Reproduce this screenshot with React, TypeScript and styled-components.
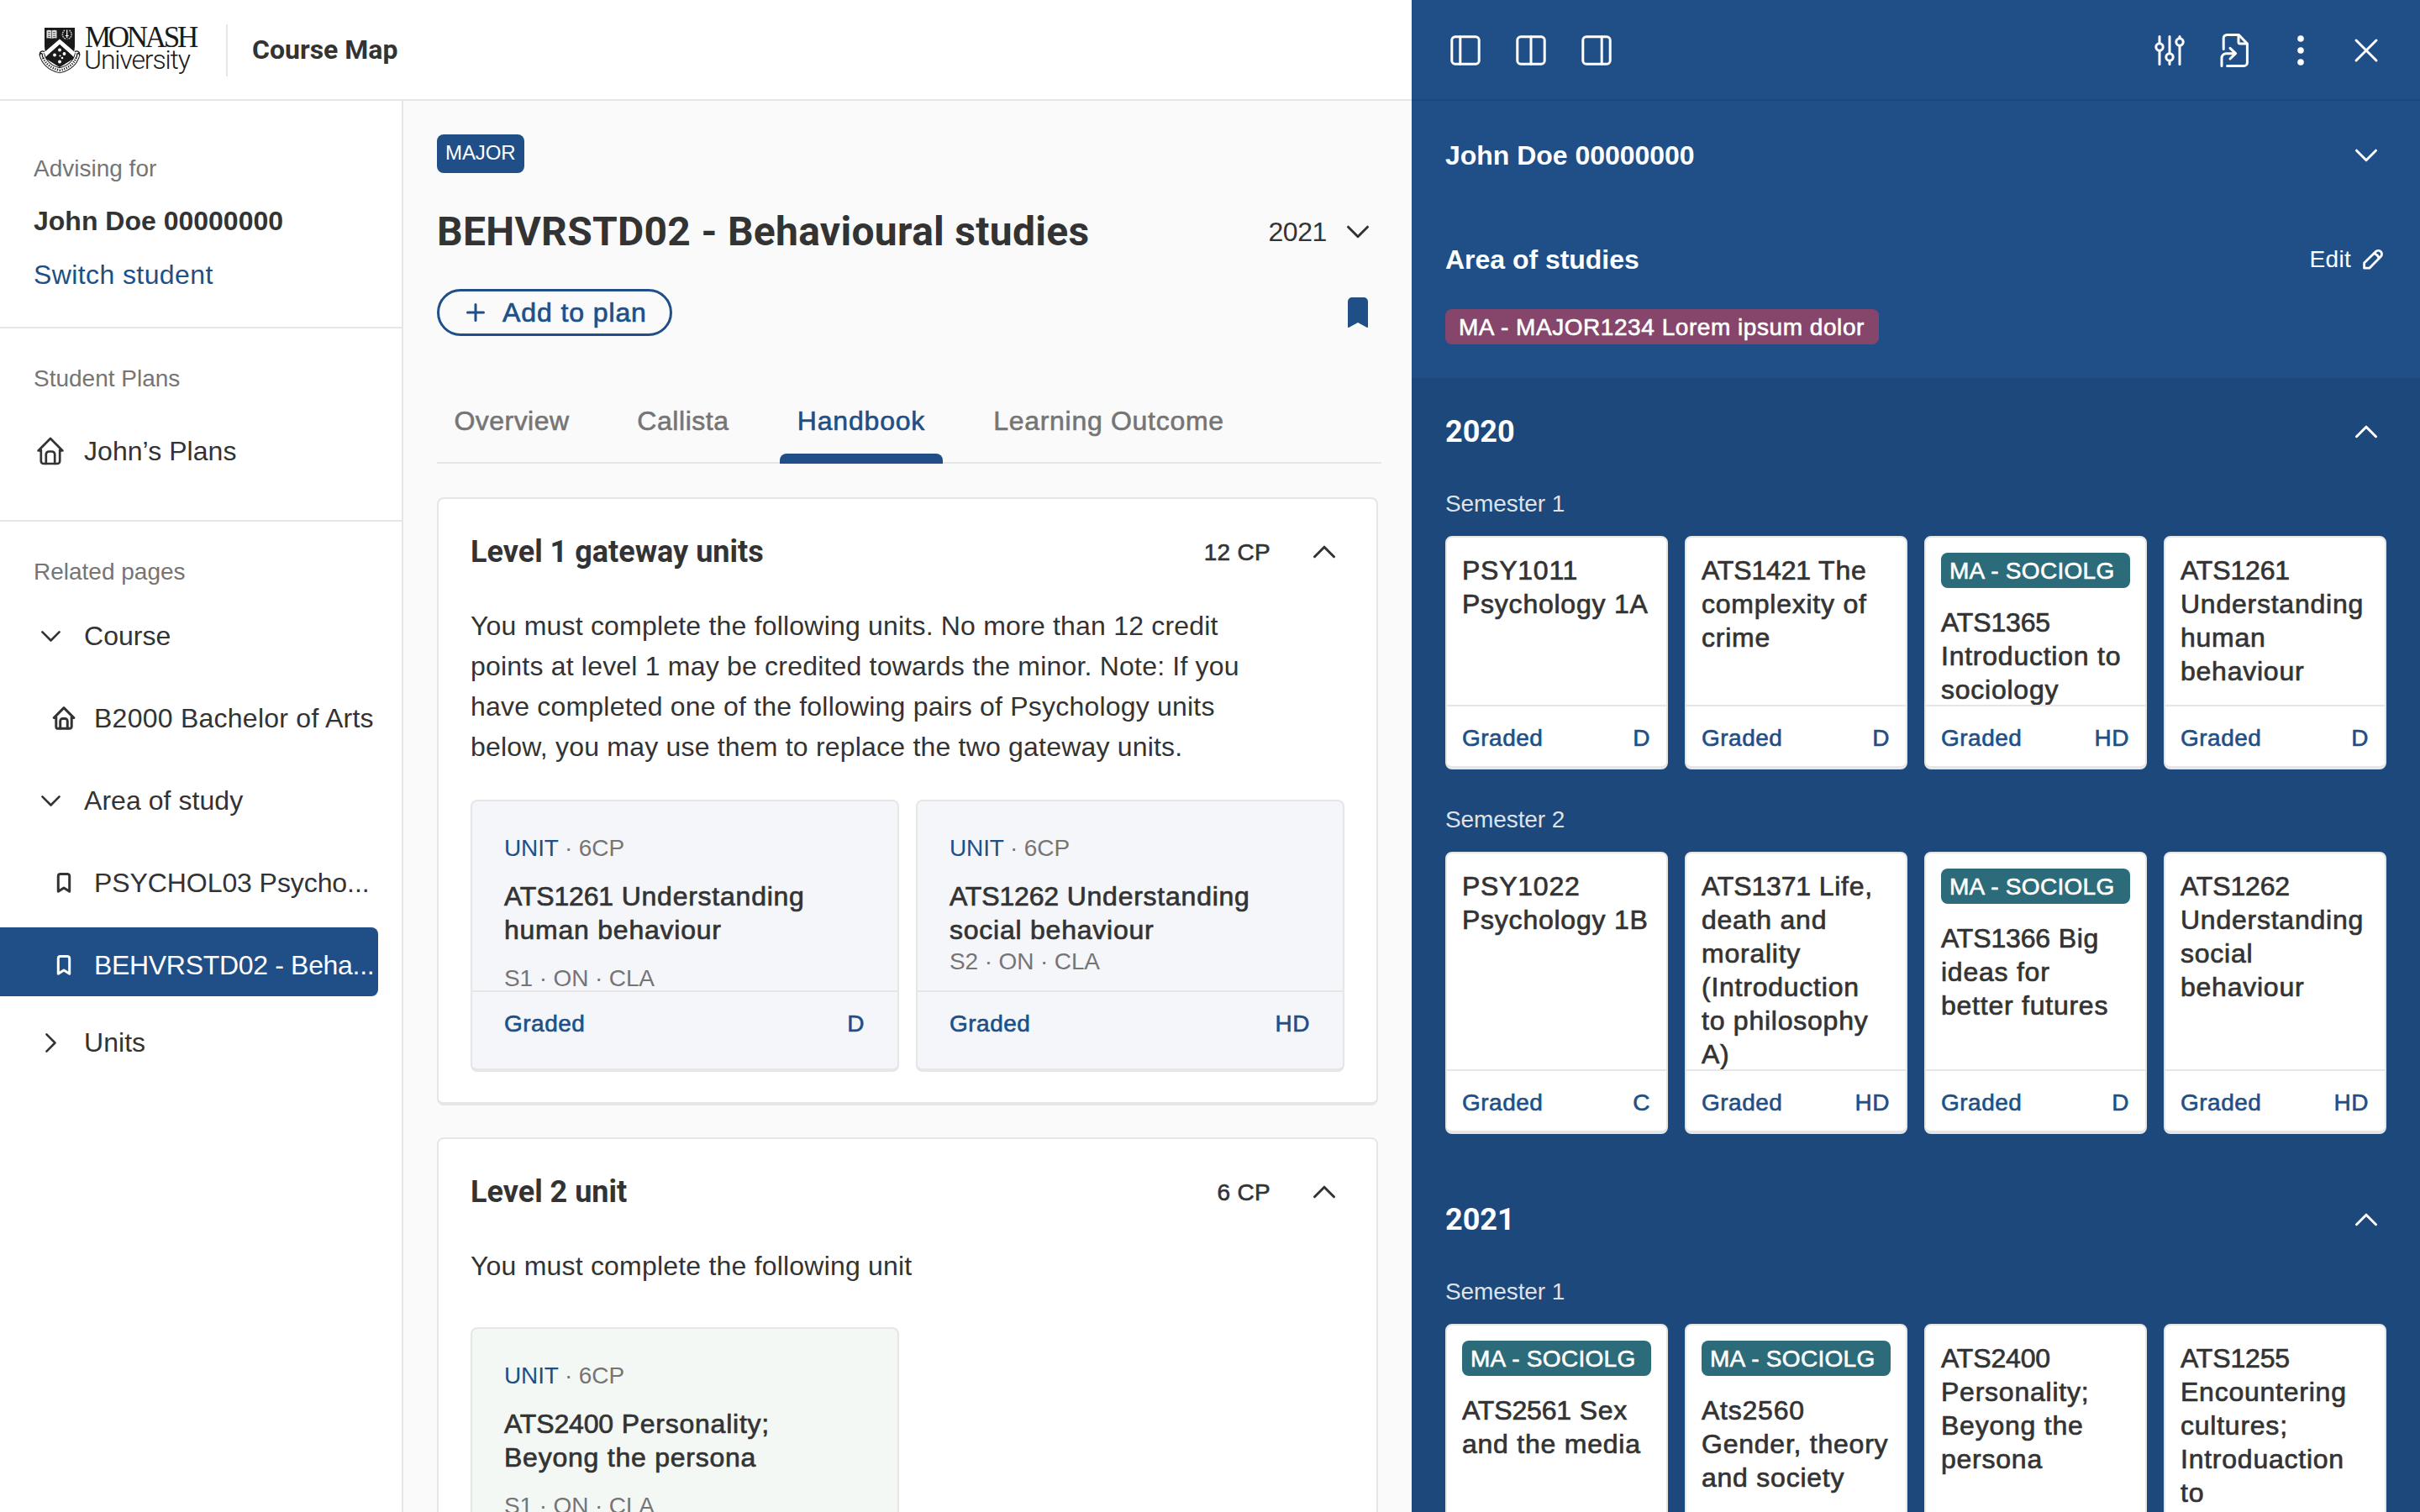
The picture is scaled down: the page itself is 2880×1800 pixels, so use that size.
import React from 'react';
import styled, { createGlobalStyle } from 'styled-components';

const c = {
  blue: '#204f87',
  navy: '#1d487b',
  ink: '#333333',
  grey: '#757575',
  line: '#e6e6e6',
  page: '#fafafa',
  plum: '#86466b',
  teal: '#2c6c7a',
};

const sans = `'Liberation Sans', Arial, Helvetica, sans-serif`;
const heading = `Roboto, 'Liberation Sans', sans-serif`;

const GlobalStyle = createGlobalStyle`
  * { box-sizing: border-box; }
  body {
    margin: 0;
    font-family: ${sans};
    font-size: 32px;
    line-height: 40px;
    letter-spacing: 0.2px;
    color: ${c.ink};
    background: #fff;
    overflow: hidden;
  }
  h1, h2, h3, p { margin: 0; }
  svg { display: block; flex: none; }
`;

/* ---------- icons ---------- */

const StrokeIcon = styled.svg<{ $w?: number }>`
  fill: none;
  stroke: currentColor;
  stroke-width: ${(p) => p.$w ?? 3};
  stroke-linecap: round;
  stroke-linejoin: round;
`;

const CHEVRONS = {
  down: 'M8.5 14.2L20 25.7L31.5 14.2',
  up: 'M8.5 25.7L20 14.2L31.5 25.7',
  right: 'M14.2 8.5L25.7 20L14.2 31.5',
};

const Chevron = ({ dir, size = 40 }: { dir: keyof typeof CHEVRONS; size?: number }) => (
  <StrokeIcon width={size} height={size} viewBox="0 0 40 40">
    <path d={CHEVRONS[dir]} />
  </StrokeIcon>
);

const House = ({ size = 34, w = 2.7 }: { size?: number; w?: number }) => (
  <StrokeIcon $w={w} width={size} height={size} viewBox="-1 0 34 34">
    <path d="M4.8 16.5H1.6L16 2L30.4 16.5H27.2" />
    <path d="M4.8 15.5V29a3 3 0 0 0 3 3H24.2a3 3 0 0 0 3-3V15.5" />
    <path d="M10.8 32V21a3.5 3.5 0 0 1 3.5-3.5h3.4a3.5 3.5 0 0 1 3.5 3.5V32" />
  </StrokeIcon>
);

const BookmarkOutline = () => (
  <StrokeIcon width={28} height={26} viewBox="-1 0 28 26">
    <path d="M6.3 23.2V5a2.6 2.6 0 0 1 2.6-2.6h8.2A2.6 2.6 0 0 1 19.7 5v18.2L13 19z" />
  </StrokeIcon>
);

const BookmarkSolid = () => (
  <svg width={24} height={36} viewBox="0 0 24 36">
    <path d="M0 35V5a5 5 0 0 1 5-5h14a5 5 0 0 1 5 5v30a1 1 0 0 1-1.5.8L12 30 1.5 35.8A1 1 0 0 1 0 35z" fill={c.blue} />
  </svg>
);

const Plus = () => (
  <StrokeIcon width={22} height={22} viewBox="0 0 22 22">
    <path d="M11 1.5v19M1.5 11h19" />
  </StrokeIcon>
);

const PanelIcon = ({ at }: { at: number }) => (
  <StrokeIcon width={40} height={40} viewBox="0 0 40 40">
    <rect x="3.8" y="3.8" width="32.4" height="32.4" rx="4" />
    <path d={`M${at} 4V36`} />
  </StrokeIcon>
);

const Sliders = () => (
  <StrokeIcon width={40} height={40} viewBox="0 0 40 40">
    <path d="M8 3.5V11.6M8 20.4V36.5M20 3.5V23.6M20 32.4V36.5M32 3.5V5.6M32 14.4V36.5" />
    <circle cx="8" cy="16" r="4.2" />
    <circle cx="20" cy="28" r="4.2" />
    <circle cx="32" cy="10" r="4.2" />
  </StrokeIcon>
);

const FileExport = () => (
  <StrokeIcon width={40} height={40} viewBox="0 0 40 40">
    <path d="M6.2 18.5V5.5a4 4 0 0 1 4-4H24.4L34.4 12V34.4a4 4 0 0 1-4 4H10.6" />
    <path d="M24 2V10a2 2 0 0 0 2 2H34" />
    <path d="M4 38.5V29.2a5.5 5.5 0 0 1 5.5-5.5H20.4M14 17.3L20.6 23.7L14 30" />
  </StrokeIcon>
);

const Dots = () => (
  <svg width={40} height={40} viewBox="0 0 40 40" fill="currentColor">
    <circle cx="20" cy="6" r="3.8" />
    <circle cx="20" cy="20" r="3.8" />
    <circle cx="20" cy="34" r="3.8" />
  </svg>
);

const Close = () => (
  <StrokeIcon width={40} height={40} viewBox="0 0 40 40">
    <path d="M8 8L32 32M32 8L8 32" />
  </StrokeIcon>
);

const Pencil = () => (
  <StrokeIcon width={24} height={24} viewBox="0 0 24 24" $w={2.8}>
    <path d="M1.6 22.2V16L15.4 2.6a4.1 4.1 0 0 1 5.9 5.9L7.8 22.2z" />
    <path d="M13.4 4.8C15.4 5 18.6 7.6 19 10.4" />
  </StrokeIcon>
);

const Crest = () => (
  <svg width={52} height={60} viewBox="0 0 52 60">
    <path d="M8 3h36v22c0 13-9 20-18 24.500C17 45 8 38 8 25z" fill="#1a1a1a" />
    <path d="M26 16.600L44 32V39L26 23 8 39V32z" fill="#fff" />
    <path d="M8 39L26 23 44 39 26 50z" fill="#1a1a1a" />
    <g fill="#fff">
      <circle cx="26" cy="29.500" r="1.900" />
      <circle cx="20" cy="35.500" r="1.900" />
      <circle cx="31.500" cy="34" r="1.900" />
      <circle cx="26.500" cy="36.500" r="1.100" />
      <circle cx="29" cy="39" r="1.300" />
      <circle cx="26" cy="43.500" r="2" />
    </g>
    <path d="M10.500 6.200q3-1 6 .4 3-1.400 6-.4v9.400q-3-.8-6 .4-3-1.200-6-.4z" fill="#ddd" />
    <path d="M16.500 6.500v9.300M12 8.500h3M12 11h3M12 13.500h3M18 8.500h3M18 11h3M18 13.500h3" stroke="#444" strokeWidth="0.800" />
    <path d="M32 6c-4 3-3.500 9 2 10.500M37.500 6c4 3 3.500 9-2 10.500" stroke="#bbb" strokeWidth="1.600" strokeDasharray="1.800 0.800" fill="none" />
    <path d="M34.700 5.500v9.500M32.700 12.500h4" stroke="#fff" strokeWidth="1.200" />
    <path d="M4.800 34C7 45 15 51 26 53.800 37 51 45 45 47.200 34" fill="none" stroke="#1a1a1a" strokeWidth="6.600" />
    <path d="M4.800 34C7 45 15 51 26 53.800 37 51 45 45 47.200 34" fill="none" stroke="#fff" strokeWidth="4.800" />
    <path d="M6.300 39C10 47 16 51 26 53.800 36 51 42 47 45.700 39" fill="none" stroke="#1a1a1a" strokeWidth="2.600" strokeDasharray="1.200 1.600" />
    <path d="M8 31.500c-3-1.500-5.800 0-5.600 3 1-1.500 3-1 3 .5s-.5 3.500 2 5M44 31.500c3-1.500 5.800 0 5.600 3-1-1.500-3-1-3 .5s.5 3.500-2 5" fill="none" stroke="#1a1a1a" strokeWidth="1.400" />
  </svg>
);

/* ---------- shell ---------- */

const Shell = styled.div`
  display: grid;
  grid-template-columns: 1680px 1200px;
  width: 2880px;
  height: 1800px;
  overflow: hidden;
`;

const Left = styled.div`
  display: grid;
  grid-template-rows: 120px 1680px;
  overflow: hidden;
`;

const Header = styled.header`
  display: flex;
  align-items: center;
  padding-left: 45px;
  background: #fff;
  border-bottom: 2px solid ${c.line};
`;

const Brand = styled.div`
  display: flex;
  align-items: center;
  height: 62px;
  width: 226px;
  margin-top: 2px;
  border-right: 2px solid ${c.line};
`;

const Wordmark = styled.div`
  display: flex;
  flex-direction: column;
  width: 140px;
  margin: -4px 0 0 3px;
  color: #1a1a1a;
  white-space: nowrap;
`;

const WordTop = styled.span`
  margin-left: 1px;
  font: 400 35px/27px 'Liberation Serif', 'Times New Roman', serif;
  letter-spacing: -3.3px;
`;

const WordBottom = styled.span`
  font: 300 32px/27px ${heading};
  letter-spacing: -1.15px;
`;

const AppName = styled.div`
  margin-left: 29px;
  font: 700 32px/40px ${heading};
  letter-spacing: 0;
`;

const Columns = styled.div`
  display: grid;
  grid-template-columns: 480px 1200px;
  overflow: hidden;
`;

/* ---------- sidebar ---------- */

const Sidebar = styled.aside`
  background: #fff;
  border-right: 2px solid ${c.line};
`;

const SideSection = styled.section<{ $h?: number }>`
  height: ${(p) => (p.$h ? `${p.$h}px` : 'auto')};
  padding-top: 39px;
  border-bottom: ${(p) => (p.$h ? `2px solid ${c.line}` : 'none')};
`;

const AdvisingSection = styled(SideSection)`
  padding: 60px 0 0 40px;
`;

const SideLabel = styled.div`
  height: 40px;
  padding-left: 40px;
  font-size: 28px;
  line-height: 42px;
  letter-spacing: 0;
  color: ${c.grey};
  ${AdvisingSection} & { padding-left: 0; }
`;

const StudentName = styled.div`
  margin-top: 23px;
  font-weight: 700;
  letter-spacing: 0;
`;

const SwitchLink = styled.a`
  display: block;
  margin-top: 24px;
  letter-spacing: 0.4px;
  color: ${c.blue};
`;

const NavRow = styled.div<{ $top: number }>`
  display: flex;
  align-items: center;
  gap: 20px;
  height: 40px;
  margin-top: ${(p) => p.$top}px;
  padding-left: 40px;
  white-space: nowrap;
  letter-spacing: 0.05px;
`;

const IconSlot = styled.span`
  display: flex;
  justify-content: center;
  width: 40px;
`;

const SubRow = styled.div<{ $top: number; $ls: number; $active?: boolean }>`
  display: flex;
  align-items: center;
  gap: 22px;
  width: 450px;
  height: 82px;
  margin-top: ${(p) => p.$top}px;
  padding: ${(p) => (p.$active ? '7px' : '1px')} 0 0 62px;
  border-radius: 0 8px 8px 0;
  white-space: nowrap;
  letter-spacing: ${(p) => p.$ls}px;
  color: ${(p) => (p.$active ? '#fff' : c.ink)};
  background: ${(p) => (p.$active ? c.blue : 'transparent')};
`;

/* ---------- main column ---------- */

const Main = styled.main`
  padding: 40px 0 0 40px;
  background: ${c.page};
  overflow: hidden;
`;

const TypeBadge = styled.div`
  display: inline-block;
  height: 46px;
  padding: 0 10px;
  border-radius: 8px;
  background: ${c.blue};
  color: #fff;
  font-size: 24px;
  line-height: 43px;
  letter-spacing: -0.1px;
  vertical-align: top;
`;

const TitleRow = styled.div`
  display: flex;
  align-items: center;
  width: 1120px;
  height: 56px;
  margin-top: 42px;
`;

const Title = styled.h1`
  flex: 1;
  font: 700 48px/56px ${heading};
  letter-spacing: 0.3px;
  white-space: nowrap;
`;

const WideSlot = styled.span`
  display: flex;
  justify-content: center;
  width: 48px;
`;

const YearPick = styled.div`
  display: flex;
  align-items: center;
  gap: 13px;
  letter-spacing: -0.4px;
`;

const ActionRow = styled.div`
  display: flex;
  align-items: center;
  justify-content: space-between;
  width: 1120px;
  margin-top: 40px;
`;

const AddButton = styled.button`
  display: flex;
  align-items: center;
  gap: 21px;
  width: 280px;
  height: 56px;
  padding: 0 0 0 32px;
  border: 3px solid ${c.blue};
  border-radius: 28px;
  background: transparent;
  color: ${c.blue};
  font: 400 32px/40px ${sans};
  letter-spacing: 0.9px;
  -webkit-text-stroke: 0.7px currentColor;
`;

const Tabs = styled.nav`
  display: flex;
  gap: 40px;
  width: 1124px;
  height: 92px;
  margin-top: 60px;
  background: linear-gradient(${c.line}, ${c.line}) bottom / 100% 2px no-repeat;
`;

const Tab = styled.a<{ $w: number; $ls: number; $active?: boolean }>`
  display: flex;
  flex-direction: column;
  justify-content: space-between;
  width: ${(p) => p.$w}px;
  padding-top: 21px;
  text-align: center;
  white-space: nowrap;
  letter-spacing: ${(p) => p.$ls}px;
  -webkit-text-stroke: 0.6px currentColor;
  color: ${(p) => (p.$active ? c.blue : c.grey)};
  &::after {
    content: '';
    height: 12px;
    border-radius: 8px 8px 0 0;
    background: ${(p) => (p.$active ? c.blue : 'transparent')};
  }
`;

const Group = styled.section`
  width: 1120px;
  margin-top: 40px;
  padding: 43px 38px 36px;
  background: #fff;
  border: 2px solid ${c.line};
  border-bottom-width: 4px;
  border-radius: 8px;
  & + & { margin-top: 38px; }
`;

const GroupHead = styled.div`
  display: flex;
  align-items: center;
  gap: 40px;
  height: 40px;
`;

const GroupTitle = styled.h2`
  flex: 1;
  font: 700 36px/40px ${heading};
  letter-spacing: 0;
`;

const Credit = styled.span`
  height: 40px;
  font-size: 28px;
  line-height: 42px;
  letter-spacing: 0.3px;
  -webkit-text-stroke: 0.6px currentColor;
`;

const Rule = styled.p`
  margin-top: 44px;
  line-height: 48px;
  white-space: pre-line;
`;

const UnitGrid = styled.div<{ $top: number }>`
  display: grid;
  grid-template-columns: 510px 510px;
  gap: 20px;
  margin-top: ${(p) => p.$top}px;
`;

const UnitCard = styled.article<{ $bg: string }>`
  height: 324px;
  border: 2px solid ${c.line};
  border-bottom-width: 4px;
  border-radius: 8px;
  background: ${(p) => p.$bg};
`;

const UnitBody = styled.div`
  height: 225px;
  padding: 37px 38px 0;
`;

const Meta = styled.div<{ $top?: number }>`
  height: 36px;
  margin-top: ${(p) => p.$top ?? 0}px;
  font-size: 28px;
  line-height: 38px;
  letter-spacing: -0.12px;
  color: ${c.grey};
  b { font-weight: 400; color: ${c.blue}; }
`;

const CourseTitle = styled.h3`
  font: 400 32px/40px ${sans};
  letter-spacing: 0.76px;
  -webkit-text-stroke: 0.7px currentColor;
`;

const TitleLine = styled.span`
  display: block;
  white-space: pre;
`;

const Code = styled.span`
  letter-spacing: -0.15px;
`;

const UnitName = styled(CourseTitle)`
  margin-top: 20px;
`;

const Result = styled.div<{ $pad: number }>`
  display: flex;
  justify-content: space-between;
  padding: 20px ${(p) => p.$pad + 1}px 0 ${(p) => p.$pad}px;
  border-top: 2px solid ${c.line};
  font-size: 28px;
  line-height: 36px;
  letter-spacing: 0.5px;
  -webkit-text-stroke: 0.6px currentColor;
  color: ${c.blue};
`;

/* ---------- plan panel ---------- */

const Panel = styled.aside`
  background: ${c.navy};
  color: #fff;
  overflow: hidden;
`;

const PanelTop = styled.div`
  height: 450px;
  background: ${c.blue};
`;

const Toolbar = styled.div`
  display: flex;
  align-items: center;
  justify-content: space-between;
  height: 120px;
  padding: 0 44px;
  border-bottom: 2px solid ${c.navy};
`;

const ToolGroup = styled.div`
  display: flex;
  gap: 38px;
  padding-top: 2px;
`;

const PanelRow = styled.div<{ $top: number }>`
  display: flex;
  align-items: center;
  justify-content: space-between;
  height: 40px;
  margin-top: ${(p) => p.$top}px;
  padding: 0 44px 0 40px;
  font-weight: 700;
  letter-spacing: -0.03px;
`;

const Edit = styled.span`
  display: flex;
  align-items: center;
  gap: 14px;
  font-weight: 400;
  font-size: 28px;
  letter-spacing: 0.3px;
`;

const Tag = styled.div<{ $bg: string }>`
  height: 42px;
  padding: 1px 10px 0;
  border-radius: 8px;
  background: ${(p) => p.$bg};
  color: #fff;
  font-size: 28px;
  line-height: 42px;
  letter-spacing: 0.3px;
  white-space: nowrap;
  -webkit-text-stroke: 0.6px currentColor;
`;

const AreaTag = styled(Tag)`
  width: 516px;
  margin: 39px 0 0 40px;
  padding-left: 16px;
  letter-spacing: 0.55px;
`;

const YearBlock = styled.section`
  padding: 44px 40px 0;
  & + & { padding-top: 82px; }
`;

const YearHead = styled.div`
  display: flex;
  align-items: center;
  justify-content: space-between;
  height: 40px;
  padding-right: 4px;
  margin-bottom: 47px;
  font: 700 36px/40px ${heading};
  letter-spacing: 0;
`;

const SemesterLabel = styled.div`
  height: 36px;
  font-size: 28px;
  line-height: 38px;
  letter-spacing: -0.1px;
  color: rgba(255, 255, 255, 0.87);
`;

const Semester = styled.div`
  & + & { margin-top: 41px; }
`;

const PlanGrid = styled.div<{ $h: number }>`
  display: grid;
  grid-template-columns: repeat(4, 265px);
  grid-auto-rows: ${(p) => p.$h}px;
  gap: 20px;
  margin-top: 21px;
`;

const PlanCard = styled.article`
  display: flex;
  flex-direction: column;
  background: #fff;
  color: ${c.ink};
  border: 2px solid ${c.line};
  border-bottom-width: 4px;
  border-radius: 8px;
`;

const PlanBody = styled.div`
  flex: 1;
  min-height: 0;
  padding: 18px 18px 0;
`;

const PlanName = styled(CourseTitle)`
  margin-top: 1px;
  ${Tag} + & { margin-top: 21px; }
`;

const PlanResult = styled(Result)`
  height: 73px;
`;

type Plan = { name: string; tag?: boolean; grade: string };

const years: { year: string; semesters: { label: string; h: number; units: Plan[] }[] }[] = [
  {
    year: '2020',
    semesters: [
      {
        label: 'Semester 1',
        h: 278,
        units: [
          { name: 'PSY1011\nPsychology 1A', grade: 'D' },
          { name: 'ATS1421 The\ncomplexity of\ncrime', grade: 'D' },
          { name: 'ATS1365\nIntroduction to\nsociology', grade: 'HD', tag: true },
          { name: 'ATS1261\nUnderstanding\nhuman\nbehaviour', grade: 'D' },
        ],
      },
      {
        label: 'Semester 2',
        h: 336,
        units: [
          { name: 'PSY1022\nPsychology 1B', grade: 'C' },
          { name: 'ATS1371 Life,\ndeath and\nmorality\n(Introduction\nto philosophy\nA)', grade: 'HD' },
          { name: 'ATS1366 Big\nideas for\nbetter futures', grade: 'D', tag: true },
          { name: 'ATS1262\nUnderstanding\nsocial\nbehaviour', grade: 'HD' },
        ],
      },
    ],
  },
  {
    year: '2021',
    semesters: [
      {
        label: 'Semester 1',
        h: 336,
        units: [
          { name: 'ATS2561 Sex\nand the media', grade: '', tag: true },
          { name: 'Ats2560\nGender, theory\nand society', grade: '', tag: true },
          { name: 'ATS2400\nPersonality;\nBeyong the\npersona', grade: '' },
          { name: 'ATS1255\nEncountering\ncultures;\nIntroduaction\nto', grade: '' },
        ],
      },
    ],
  },
];

/* One block per line; codes starting with ATS are set tighter than the rest. */
const CourseText = ({ text }: { text: string }) => (
  <>
    {text.split('\n').map((line) => (
      <TitleLine key={line}>
        {line.startsWith('ATS') ? (
          <>
            <Code>{line.slice(0, 7)}</Code>
            {line.slice(7)}
          </>
        ) : (
          line
        )}
      </TitleLine>
    ))}
  </>
);

type UnitProps = { name: string; when: string; grade?: string; bg: string; whenTop?: number };

const Unit = ({ name, when, grade, bg, whenTop = 19 }: UnitProps) => (
  <UnitCard $bg={bg}>
    <UnitBody>
      <Meta><b>UNIT</b> · 6CP</Meta>
      <UnitName><CourseText text={name} /></UnitName>
      <Meta $top={whenTop}>{when}</Meta>
    </UnitBody>
    {grade && <Result $pad={38}><span>Graded</span><span>{grade}</span></Result>}
  </UnitCard>
);

const Side = () => (
  <Sidebar>
    <AdvisingSection $h={271}>
      <SideLabel>Advising for</SideLabel>
      <StudentName>John Doe 00000000</StudentName>
      <SwitchLink>Switch student</SwitchLink>
    </AdvisingSection>
    <SideSection $h={230}>
      <SideLabel>Student Plans</SideLabel>
      <NavRow $top={47}><IconSlot><House /></IconSlot>John’s Plans</NavRow>
    </SideSection>
    <SideSection>
      <SideLabel>Related pages</SideLabel>
      <NavRow $top={37}><IconSlot><Chevron dir="down" size={35} /></IconSlot>Course</NavRow>
      <SubRow $top={36} $ls={0.25}><House size={28} w={3.6} />B2000 Bachelor of Arts</SubRow>
      <NavRow $top={38}><IconSlot><Chevron dir="down" size={35} /></IconSlot>Area of study</NavRow>
      <SubRow $top={36} $ls={-0.08}><BookmarkOutline />PSYCHOL03 Psycho...</SubRow>
      <SubRow $top={13} $ls={-0.32} $active><BookmarkOutline />BEHVRSTD02 - Beha...</SubRow>
      <NavRow $top={35}><IconSlot><Chevron dir="right" size={35} /></IconSlot>Units</NavRow>
    </SideSection>
  </Sidebar>
);

const Content = () => (
  <Main>
    <TypeBadge>MAJOR</TypeBadge>
    <TitleRow>
      <Title>BEHVRSTD02 - Behavioural studies</Title>
      <YearPick>2021<WideSlot><Chevron dir="down" /></WideSlot></YearPick>
    </TitleRow>
    <ActionRow>
      <AddButton><Plus />Add to plan</AddButton>
      <WideSlot><BookmarkSolid /></WideSlot>
    </ActionRow>
    <Tabs>
      <Tab $w={178} $ls={0.45}>Overview</Tab>
      <Tab $w={150} $ls={0.55}>Callista</Tab>
      <Tab $w={194} $ls={0.8} $active>Handbook</Tab>
      <Tab $w={315} $ls={0.7}>Learning Outcome</Tab>
    </Tabs>
    <Group>
      <GroupHead>
        <GroupTitle>Level 1 gateway units</GroupTitle>
        <Credit>12 CP</Credit>
        <WideSlot><Chevron dir="up" /></WideSlot>
      </GroupHead>
      <Rule>
        {'You must complete the following units. No more than 12 credit\npoints at level 1 may be credited towards the minor. Note: If you\nhave completed one of the following pairs of Psychology units\nbelow, you may use them to replace the two gateway units.'}
      </Rule>
      <UnitGrid $top={39}>
        <Unit bg="#f5f6fa" name={'ATS1261 Understanding\nhuman behaviour'} when="S1 · ON · CLA" grade="D" />
        <Unit bg="#f5f6fa" name={'ATS1262 Understanding\nsocial behaviour'} when="S2 · ON · CLA" grade="HD" whenTop={-1} />
      </UnitGrid>
    </Group>
    <Group>
      <GroupHead>
        <GroupTitle>Level 2 unit</GroupTitle>
        <Credit>6 CP</Credit>
        <WideSlot><Chevron dir="up" /></WideSlot>
      </GroupHead>
      <Rule>You must complete the following unit</Rule>
      <UnitGrid $top={49}>
        <Unit bg="#f4f8f5" name={'ATS2400 Personality;\nBeyong the persona'} when="S1 · ON · CLA" />
      </UnitGrid>
    </Group>
  </Main>
);

const PlanPanel = () => (
  <Panel>
    <PanelTop>
      <Toolbar>
        <ToolGroup><PanelIcon at={13.8} /><PanelIcon at={20} /><PanelIcon at={26.2} /></ToolGroup>
        <ToolGroup><Sliders /><FileExport /><Dots /><Close /></ToolGroup>
      </Toolbar>
      <PanelRow $top={45}>John Doe 00000000<Chevron dir="down" /></PanelRow>
      <PanelRow $top={84}>Area of studies<Edit>Edit<Pencil /></Edit></PanelRow>
      <AreaTag $bg={c.plum}>MA - MAJOR1234 Lorem ipsum dolor</AreaTag>
    </PanelTop>
    {years.map(({ year, semesters }) => (
      <YearBlock key={year}>
        <YearHead>{year}<Chevron dir="up" /></YearHead>
        {semesters.map(({ label, h, units }) => (
          <Semester key={label}>
            <SemesterLabel>{label}</SemesterLabel>
            <PlanGrid $h={h}>
              {units.map(({ name, tag, grade }) => (
                <PlanCard key={name}>
                  <PlanBody>
                    {tag && <Tag $bg={c.teal}>MA - SOCIOLG</Tag>}
                    <PlanName><CourseText text={name} /></PlanName>
                  </PlanBody>
                  {grade && <PlanResult $pad={18}><span>Graded</span><span>{grade}</span></PlanResult>}
                </PlanCard>
              ))}
            </PlanGrid>
          </Semester>
        ))}
      </YearBlock>
    ))}
  </Panel>
);

export default function App() {
  return (
    <>
      <GlobalStyle />
      <Shell>
        <Left>
          <Header>
            <Brand>
              <Crest />
              <Wordmark>
                <WordTop>MONASH</WordTop>
                <WordBottom>University</WordBottom>
              </Wordmark>
            </Brand>
            <AppName>Course Map</AppName>
          </Header>
          <Columns>
            <Side />
            <Content />
          </Columns>
        </Left>
        <PlanPanel />
      </Shell>
    </>
  );
}
